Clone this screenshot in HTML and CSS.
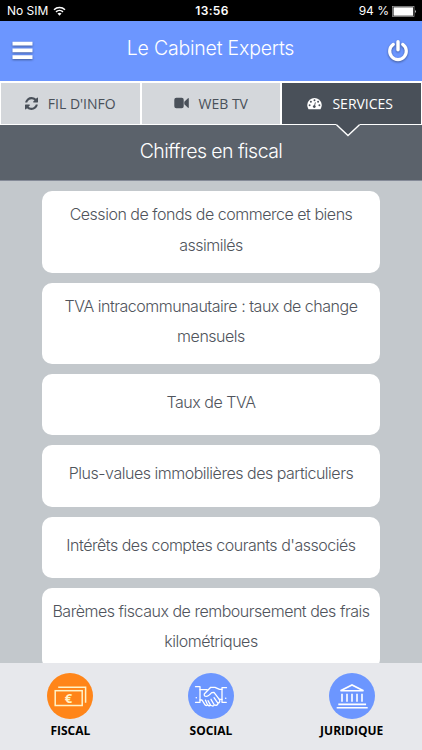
FILE: index.html
```html
<!DOCTYPE html>
<html lang="fr">
<head>
    <meta charset="utf-8">
    <meta name="viewport" content="width=device-width, initial-scale=1">
    <title>Le Cabinet Experts</title>
    <link rel="stylesheet" href="styles.css">
</head>
<body>
<div class="status-bar">
  <div class="carrier">
    <span>No SIM</span>
    <svg class="wifi" viewBox="0 0 13 10" width="13" height="10">
      <path d="M1 3.7a8 8 0 0 1 11 0M3 5.9a5 5 0 0 1 7 0" fill="none" stroke="#fff" stroke-width="1.5"/>
      <path d="M4.5 7.6a3 3 0 0 1 4 0l-2 2.1z" fill="#fff"/>
    </svg>
  </div>
  <div class="clock">13:56</div>
  <div class="battery">
    <span>94 %</span>
    <svg viewBox="0 0 25 11" width="25" height="11">
      <rect x=".5" y=".5" width="21.5" height="10" fill="none" stroke="#aaa" stroke-width=".7"/>
      <rect x="1.5" y="1.3" width="19.5" height="8.4" fill="#fff"/>
      <path d="M23.2 3.7q1.6 1.8 0 3.6z" fill="#fff"/>
    </svg>
  </div>
</div>

<header class="header">
  <svg class="header-icon" viewBox="0 0 22 20" width="22" height="20">
    <path d="M.5 2.6h20M.5 9.3h20M.5 16.1h20" stroke="#fff" stroke-width="3.7"/>
  </svg>
  <h1>Le Cabinet Experts</h1>
  <svg class="header-icon power" viewBox="0 0 22 22" width="22" height="22">
    <path d="M6.3 4.4a8.3 8.3 0 1 0 9.4 0" fill="none" stroke="#fff" stroke-width="3.2" stroke-linecap="round"/>
    <path d="M11 1.8v8" stroke="#fff" stroke-width="3.4" stroke-linecap="round"/>
  </svg>
</header>

<nav class="tabs">
  <a class="tab">
    <svg viewBox="0 0 1536 1536" width="13" height="13">
      <path fill="currentColor" d="M1511 928q0 5-1 7-64 268-268 434.500T764 1536q-146 0-282.500-55T238 1324l-129 129q-19 19-45 19t-45-19-19-45V960q0-26 19-45t45-19h448q26 0 45 19t19 45-19 45l-137 137q71 66 161 102t187 36q134 0 250-65t186-179q11-17 53-117 8-23 30-23h192q13 0 22.500 9.500t9.500 22.500zm25-800v448q0 26-19 45t-45 19h-448q-26 0-45-19t-19-45 19-45l138-138Q969 256 768 256q-134 0-250 65T332 500q-11 17-53 117-8 23-30 23H50q-13 0-22.500-9.500T18 608v-7q65-268 270-434.500T768 0q146 0 284 55.500T1297 212l130-129q19-19 45-19t45 19 19 45z"/>
    </svg>
    <span>FIL D'INFO</span>
  </a>
  <a class="tab">
    <svg viewBox="0 0 15 12" width="15" height="12">
      <path fill="currentColor" d="M2.300 .8h5.400q2 0 2 2v6.400q0 2-2 2H2.300q-2 0-2-2V2.800q0-2 2-2zM10.300 4.800 14 1.300q.8-.5.800.4v8.600q0 .9-.8.400l-3.700-3.500z"/>
    </svg>
    <span>WEB TV</span>
  </a>
  <a class="tab active">
    <svg viewBox="0 0 15 13" width="15" height="13">
      <path fill="#fff" d="M1.500 12.200A7.200 7.200 0 1 1 13.500 12.200z"/>
      <g fill="#495059">
        <circle cx="2.600" cy="8.200" r=".95"/>
        <circle cx="3.900" cy="4.700" r=".95"/>
        <circle cx="7.500" cy="3.200" r=".95"/>
        <circle cx="11.100" cy="4.700" r=".95"/>
        <circle cx="12.400" cy="8.200" r=".95"/>
        <circle cx="7.300" cy="9.600" r="1.400"/>
      </g>
      <path d="M7.300 9.500 8.400 5.400" stroke="#495059" stroke-width=".9"/>
    </svg>
    <span>SERVICES</span>
    <svg class="pointer" viewBox="0 0 24 13" width="24" height="13">
      <path d="M0 0h24L12.500 11.300h-1z" fill="#495059"/>
      <path d="M.5.700 12 11.500 23.500.700" fill="none" stroke="#fff" stroke-width="1.400"/>
    </svg>
  </a>
</nav>

<h2 class="page-title">Chiffres en fiscal</h2>

<main class="list">
  <a class="card">Cession de fonds de commerce et biens<br>assimilés</a>
  <a class="card">TVA intracommunautaire : taux de change<br>mensuels</a>
  <a class="card single">Taux de TVA</a>
  <a class="card single">Plus-values immobilières des particuliers</a>
  <a class="card single">Intérêts des comptes courants d'associés</a>
  <a class="card">Barèmes fiscaux de remboursement des frais<br>kilométriques</a>
</main>

<footer class="footer">
  <a class="footer-item">
    <svg class="round active" viewBox="0 0 46 46" width="46" height="46">
      <g fill="none" stroke="#fff3c8" stroke-width="1.500">
        <rect x="8.200" y="17.700" width="27" height="14.800"/>
        <path d="M11.200 14.300h27.400v15.400"/>
      </g>
      <text class="euro" x="21.500" y="29.500" text-anchor="middle">€</text>
    </svg>
    <span>FISCAL</span>
  </a>
  <a class="footer-item">
    <svg class="round" viewBox="0 0 46 46" width="46" height="46">
      <g fill="none" stroke="#fff" stroke-width="1.300" stroke-linecap="round" stroke-linejoin="round">
        <!-- cuffs -->
        <path d="M7.500 13.700H12v15.600H7.500M38.500 14.700H34v14.600h4.300"/>
        <!-- hands -->
        <path d="M12 16.700h6.500l1.500.5M34 16.300h-2.500l-4.500-2h-4.300L16.300 21q-.4 2.400 2 2.400 2 0 5.400-3.800l2.300-.2 5.300 6.900H34"/>
        <path d="M12 27h2l3 4.800q1.500 1.600 2.500-.3M17.500 27.200l2 4.500q1.500 1.700 3.200.6L20 27.700M22.700 32.300q2.500 1.500 3.600-.3L23 26.300M26.300 32q3.200 1 3.700-1.700L26 24.700M30 30.300q2.700-1 1.300-4"/>
      </g>
      <circle cx="8.300" cy="24.700" r=".8" fill="#fff"/>
      <circle cx="37.700" cy="25.300" r=".8" fill="#fff"/>
    </svg>
    <span>SOCIAL</span>
  </a>
  <a class="footer-item">
    <svg class="round" viewBox="0 0 46 46" width="46" height="46">
      <g fill="none" stroke="#fff" stroke-width="1.600">
        <path d="M11.500 17.800 23 12l11.500 5.800z"/>
        <path d="M13 20.800v8M18 20.800v8M23 20.800v8M28 20.800v8M33 20.800v8M9.300 31.400h27.800M7.700 34.800h31"/>
      </g>
    </svg>
    <span>JURIDIQUE</span>
  </a>
</footer>
</body>
</html>
```

FILE: styles.css
```css
* {
    box-sizing: border-box;
}

body {
    margin: 0;
    height: 750px;
    display: flex;
    flex-direction: column;
    overflow: hidden;
    background: #c3c8cc;
    font-family: "Open Sans", sans-serif;
    color: #495059;
}

.status-bar {
    flex: none;
    display: grid;
    grid-template-columns: 1fr auto 1fr;
    align-items: center;
    height: 21px;
    padding: 1px 5px 0 7px;
    background: #000;
    color: #fff;
    font: 12px/20px Inter, sans-serif;
}

.carrier {
    display: flex;
    align-items: center;
    gap: 5px;
}

.clock {
    font-weight: 600;
    letter-spacing: .3px;
}

.battery {
    display: flex;
    align-items: center;
    justify-content: flex-end;
    gap: 3px;
}

.header {
    flex: none;
    display: flex;
    align-items: center;
    justify-content: space-between;
    height: 60px;
    padding: 0 13px 0 12px;
    background: #6c96ff;
    color: #fff;
}

.header h1 {
    margin: 0 0 6px;
    font: 300 19.500px/30px Inter, sans-serif;
    letter-spacing: -.2px;
}

.header-icon {
    overflow: visible;
    filter: drop-shadow(0 1.500px 1px rgba(0, 0, 0, .4));
}

.tabs {
    flex: none;
    display: grid;
    grid-template-columns: repeat(3, 138.500px);
    gap: 2px;
    height: 44px;
    padding: 2px 1px 1px;
    background: #fff;
}

.tab {
    position: relative;
    display: flex;
    align-items: center;
    justify-content: center;
    gap: 10px;
    padding-bottom: 1px;
    background: #d4d7db;
    font-size: 14px;
    color: #495059;
}

.tab.active {
    padding-right: 2px;
    background: #495059;
    color: #fff;
}

.pointer {
    position: absolute;
    left: 54px;
    top: 100%;
}

.page-title {
    flex: none;
    height: 56px;
    margin: 0;
    border-bottom: 1px solid #858b98;
    background: #5b626b;
    color: #fff;
    text-align: center;
    font: 300 19.500px/53px Inter, sans-serif;
    letter-spacing: -.55px;
}

.list {
    flex: 1;
    min-height: 0;
    display: flex;
    flex-direction: column;
    gap: 10px;
    overflow: hidden;
    padding: 10px 42px 0;
}

.card {
    flex: none;
    height: 81.500px;
    padding-top: 8px;
    border-radius: 10px;
    background: #fff;
    color: #50545c;
    text-align: center;
    white-space: nowrap;
    font: 300 16px/30.600px Inter, sans-serif;
    letter-spacing: -.48px;
}

.card.single {
    height: 61.300px;
    padding-top: 13px;
}

.footer {
    flex: none;
    display: grid;
    grid-template-columns: repeat(3, 1fr);
    height: 87px;
    padding-top: 10px;
    background: #e7e8ec;
}

.footer-item {
    display: flex;
    flex-direction: column;
    align-items: center;
    gap: 3px;
    color: #000;
    font-size: 12px;
    font-weight: 700;
    line-height: 18px;
}

.round {
    border-radius: 50%;
    background: #6c96ff;
}

.round.active {
    background: #ff8519;
}

.euro {
    fill: #fff3c8;
    font: 700 13px "Open Sans", sans-serif;
}
```
